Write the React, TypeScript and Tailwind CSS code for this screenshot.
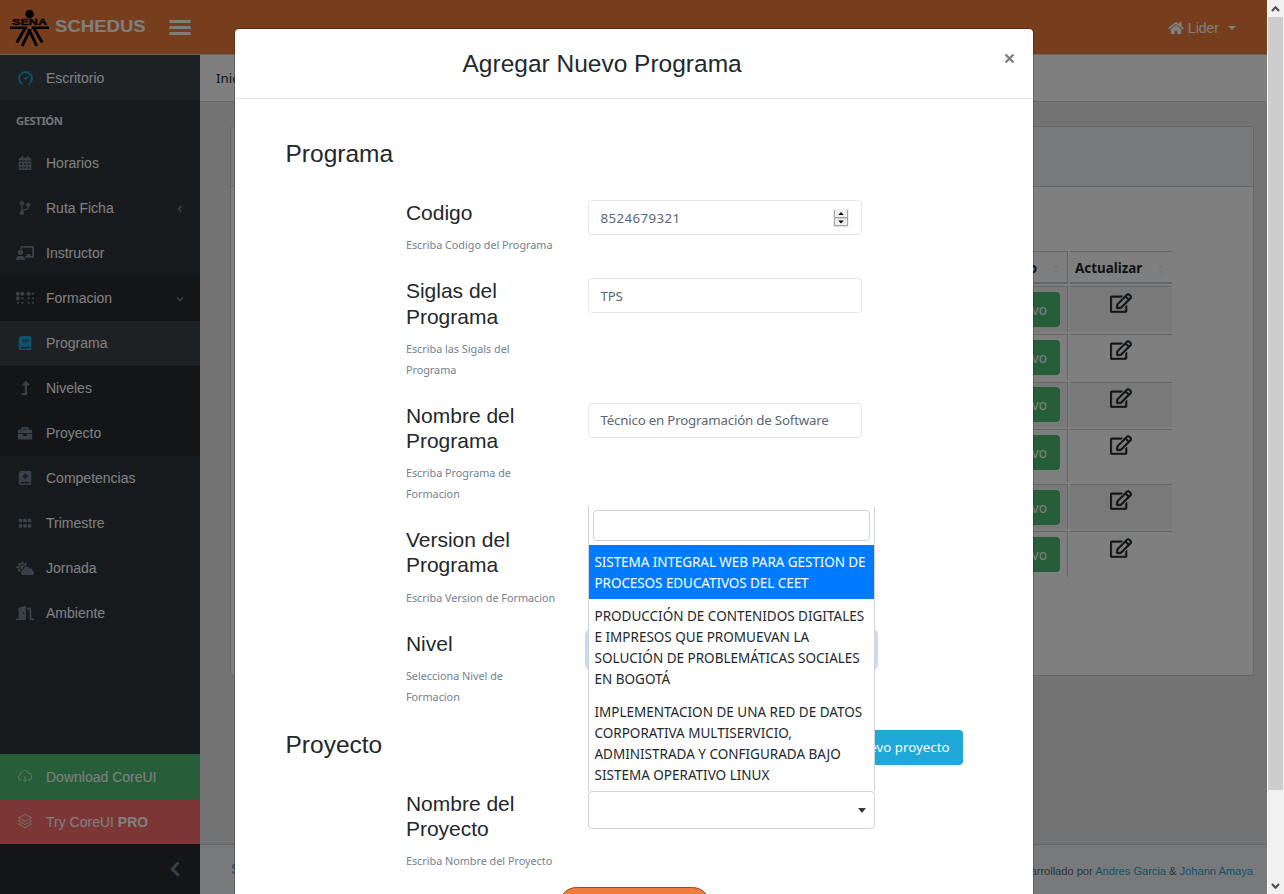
import React from "react";
import {
  FaBook,
  FaBookMedical,
  FaBraille,
  FaBriefcase,
  FaCalendarAlt,
  FaChalkboardTeacher,
  FaCloudSun,
  FaCodeBranch,
  FaDoorOpen,
  FaGripHorizontal,
  FaHome,
  FaLevelUpAlt,
  FaRegEdit,
} from "react-icons/fa";
import { SlCloudDownload, SlLayers, SlSpeedometer } from "react-icons/sl";

const sans = "font-['Liberation_Sans',Arial,sans-serif]";
const ui = "font-['Noto_Sans','Open_Sans',sans-serif]";

function Logo() {
  return (
    <svg width="40" height="40" viewBox="0 0 40 40" className="shrink-0">
      <circle cx="19.6" cy="5" r="4.3" />
      <text
        x="2"
        y="16.4"
        textLength="35"
        lengthAdjust="spacingAndGlyphs"
        fontSize="9"
        fontWeight="700"
        fontFamily="Liberation Sans, Arial, sans-serif"
        stroke="#000"
        strokeWidth="0.3"
      >
        SENA
      </text>
      <path d="M0 17.6h17.6l-1 2.4H0zM39 17.6H21.4l1 2.4H39z" />
      <path
        d="M15.4 18.8 6.8 33.6M23.6 18.8l8.6 14.8M19.5 21.6 12.2 37M19.5 21.6l7.3 15.4"
        stroke="#000"
        strokeWidth="2.9"
        fill="none"
      />
      <path d="M17 20h5l-2.5 5z" />
    </svg>
  );
}

function Chevron({ open = false }: { open?: boolean }) {
  return (
    <svg width="8" height="8" viewBox="0 0 8 8" fill="none" stroke="#73818f" strokeWidth="1.5">
      <path d={open ? "M1 2.5 4 5.5 7 2.5" : "M5.5 1 2.5 4 5.5 7"} />
    </svg>
  );
}

type Item = {
  label: string;
  icon: React.ReactNode;
  active?: boolean;
  chevron?: "open" | "closed";
};

function NavItem({ label, icon, active, chevron }: Item) {
  return (
    <div className={`flex h-[45px] items-center px-4 ${active ? "bg-[#3a4248]" : ""}`}>
      <span
        className={`flex w-[18px] shrink-0 justify-center pb-px [&>svg]:h-[14.4px] [&>svg]:w-[18px] [&>svg]:shrink-0 ${active ? "text-[#20a8d8]" : "text-[#73818f]"}`}
      >
        {icon}
      </span>
      <span className="ml-3 flex-1 text-[14px] text-white">{label}</span>
      {chevron && <Chevron open={chevron === "open"} />}
    </div>
  );
}

function Sidebar() {
  return (
    <nav className={`flex w-[200px] shrink-0 flex-col bg-[#2f353a] ${sans}`}>
      <div className="flex h-[45px] items-center bg-[#3a4248] px-4 pt-px text-[14px] text-white">
        <SlSpeedometer className="mx-[1.5px] h-[15px] w-[15px] pb-px text-[#20a8d8]" stroke="currentColor" strokeWidth="45" />
        <span className="ml-3">Escritorio</span>
      </div>
      <div className={`flex h-[41px] items-center px-4 pt-[2px] text-[11.2px] font-bold tracking-[-0.4px] text-[#e4e5e6] ${ui}`}>
        GESTIÓN
      </div>
      <NavItem label="Horarios" icon={<FaCalendarAlt />} />
      <NavItem label="Ruta Ficha" icon={<FaCodeBranch />} chevron="closed" />
      <NavItem label="Instructor" icon={<FaChalkboardTeacher />} />
      <div className="bg-[#262a2e]">
        <NavItem label="Formacion" icon={<FaBraille stroke="currentColor" strokeWidth="20" />} chevron="open" />
        <NavItem label="Programa" icon={<FaBook />} active />
        <NavItem label="Niveles" icon={<FaLevelUpAlt />} />
        <NavItem label="Proyecto" icon={<FaBriefcase />} />
      </div>
      <NavItem label="Competencias" icon={<FaBookMedical />} />
      <NavItem label="Trimestre" icon={<FaGripHorizontal />} />
      <NavItem label="Jornada" icon={<FaCloudSun />} />
      <NavItem label="Ambiente" icon={<FaDoorOpen />} />
      <div className="mt-auto flex h-[45px] items-center bg-[#4dbd74] px-4 pt-px text-[14px] text-white">
        <span className="flex w-[18px] justify-center pb-[2px] opacity-70">
          <SlCloudDownload />
        </span>
        <span className="ml-3">Download CoreUI</span>
      </div>
      <div className="flex h-[45px] items-center bg-[#f86c6b] px-4 pt-px text-[14px] text-white">
        <span className="flex w-[18px] justify-center pb-[2px] opacity-70">
          <SlLayers />
        </span>
        <span className="ml-3">
          Try CoreUI <b>PRO</b>
        </span>
      </div>
      <div className="flex h-[50px] items-center justify-end bg-[#262a2e] pr-5">
        <svg width="10" height="16" viewBox="0 0 10 16" fill="none" stroke="#73818f" strokeWidth="3">
          <path d="M8.5 1.5 2.3 8l6.2 6.5" />
        </svg>
      </div>
    </nav>
  );
}

function SortMark() {
  return (
    <svg width="6" height="10" viewBox="0 0 6 10" fill="#f1f1f1">
      <path d="M3 0 6 4H0zM3 10 0 6h6z" />
    </svg>
  );
}

const rows = [
  { height: "h-[46px]", button: "mt-[5px]", icon: "mt-[6px]", odd: true },
  { height: "h-[46px]", button: "mt-[5px]", icon: "mt-[5px]", odd: false },
  { height: "h-[45px]", button: "mt-[4px]", icon: "mt-[5px]", odd: true },
  { height: "h-[53px]", button: "mt-[5px]", icon: "mt-[5px]", odd: false },
  { height: "h-[45px]", button: "mt-[5px]", icon: "mt-[5px]", odd: true },
  { height: "h-[46px]", button: "mt-[5px]", icon: "mt-[6px]", odd: false },
];

function ProgramTable() {
  return (
    <div className={`mt-16 mr-[81px] ml-auto flex w-[300px] flex-col gap-[2px] text-[14px] text-[#23282c] ${ui}`}>
      <div className="flex h-[33px] gap-[2px] font-bold">
        <div className="flex flex-1 items-center justify-end gap-4 border-t border-r border-b-2 border-[#c8ced3] pt-[3px] pr-2 text-[13.4px]">
          Estado
          <SortMark />
        </div>
        <div className="flex w-[102px] items-center justify-between border-t border-b-2 border-[#c8ced3] pt-[3px] pr-2 pl-[5px] text-[13.4px]">
          Actualizar
          <SortMark />
        </div>
      </div>
      {rows.map((row, i) => (
        <div key={i} className={`flex gap-[2px] ${row.height}`}>
          <div
            className={`flex flex-1 items-start justify-end border-t border-r border-[#c8ced3] pr-[7px] ${row.odd ? "bg-[#f2f2f2]" : ""}`}
          >
            <button
              className={`h-[35px] rounded bg-[#4dbd74] px-[13px] pt-[2px] text-[13.6px] text-white ${row.button}`}
            >
              Activo
            </button>
          </div>
          <div
            className={`flex w-[102px] items-start justify-center border-t border-[#c8ced3] ${row.odd ? "bg-[#f2f2f2]" : ""}`}
          >
            <FaRegEdit className={`h-[20px] w-[22px] ${row.icon}`} stroke="currentColor" strokeWidth="10" />
          </div>
        </div>
      ))}
    </div>
  );
}

function Page() {
  return (
    <div className="flex h-full w-[1267px] flex-col bg-[#e4e6e5]">
      <header className={`flex h-[55px] shrink-0 items-center border-b border-[#c8ced3] bg-[#ef7c3c] pl-[10px] text-white ${sans}`}>
        <div className="flex items-center pt-[3px]">
          <Logo />
          <span className="ml-[5px] w-[91px] origin-left scale-x-[1.16] pb-[3px] text-[16px] leading-none font-bold">
            SCHEDUS
          </span>
        </div>
        <div className="ml-[23px] flex w-[22px] flex-col gap-[3px]">
          <i className="h-[3px] rounded-full bg-white" />
          <i className="h-[3px] rounded-full bg-white" />
          <i className="h-[3px] rounded-full bg-white" />
        </div>
        <div className="mr-[31px] ml-auto flex items-center pt-[2px] text-[14px]">
          <FaHome className="mr-1 h-[14px] w-[16px]" />
          Lider
          <i className="ml-[9px] border-x-[4.5px] border-t-4 border-x-transparent border-t-white" />
        </div>
      </header>
      <div className="flex flex-1">
        <Sidebar />
        <main className="flex flex-1 flex-col">
          <div className={`flex h-[47px] items-center border-b border-[#c8ced3] bg-white px-4 pt-[2px] text-[13.3px] text-[#23282c] ${ui}`}>
            Inicio
          </div>
          <section className="mt-6 mr-[13px] ml-[30px] flex h-[550px] flex-col rounded border border-[#c8ced3] bg-white">
            <div className="h-[60px] shrink-0 rounded-t border-b border-[#c8ced3] bg-[#f0f3f5]" />
            <ProgramTable />
          </section>
          <footer
            className={`mt-auto flex h-[50px] items-center border-t border-[#c8ced3] bg-[#f0f3f5] pr-[14px] pl-[31px] text-[11.2px] ${sans}`}
          >
            <span className="text-[14px] text-[#20a8d8]">SENA</span>
            <span className="ml-auto pt-[3px] tracking-[-0.05px] text-[#5c6873]">
              Desarrollado por <span className="text-[#20a8d8]">Andres Garcia</span> &amp;{" "}
              <span className="text-[#20a8d8]">Johann Amaya</span>
            </span>
          </footer>
        </main>
      </div>
    </div>
  );
}

type FieldProps = { title: string[]; help: string[]; children?: React.ReactNode };

function Field({ title, help, children }: FieldProps) {
  return (
    <div className="mb-[23px] flex pl-[170.4px]">
      <div className="w-[182.6px] shrink-0">
        <h4 className={`text-[21px] leading-[25.2px] text-[#23282c] ${sans}`}>
          {title.map((line) => (
            <span key={line} className="block">
              {line}
            </span>
          ))}
        </h4>
        <p className={`mt-[9px] text-[10.8px] leading-[21px] text-[#73818f] ${ui}`}>
          {help.map((line) => (
            <span key={line} className="block whitespace-nowrap">
              {line}
            </span>
          ))}
        </p>
      </div>
      {children}
    </div>
  );
}

function TextBox({ value, stepper }: { value: string; stepper?: boolean }) {
  return (
    <div
      className={`flex h-[35px] w-[274px] items-center rounded border border-[#e4e7ea] pr-3 pl-[11px] text-[13.3px] text-[#5c6873] ${ui} ${stepper ? "tracking-[0.4px]" : "tracking-[-0.2px]"}`}
    >
      <span className="pt-[2px]">{value}</span>
      {stepper && (
        <svg width="16" height="18" viewBox="0 0 16 18" className="ml-auto">
          <path fill="#f0f0f0" d="M0 0h16v18H0z" />
          <path fill="#a5a5a5" d="M1 1h1v16H1zM14 1h1v16h-1zM1 8h14v1.5H1zM1 16h14v1.3H1z" />
          <path d="M8 3l2.7 3H5.3zM8 14.5l2.7-3H5.3z" />
        </svg>
      )}
    </div>
  );
}

const options = [
  ["SISTEMA INTEGRAL WEB PARA GESTION DE", "PROCESOS EDUCATIVOS DEL CEET"],
  [
    "PRODUCCIÓN DE CONTENIDOS DIGITALES",
    "E IMPRESOS QUE PROMUEVAN LA",
    "SOLUCIÓN DE PROBLEMÁTICAS SOCIALES",
    "EN BOGOTÁ",
  ],
  [
    "IMPLEMENTACION DE UNA RED DE DATOS",
    "CORPORATIVA MULTISERVICIO,",
    "ADMINISTRADA Y CONFIGURADA BAJO",
    "SISTEMA OPERATIVO LINUX",
  ],
];

function ProjectSelect() {
  return (
    <div className="relative h-[38px] w-[287px]">
      <div className="flex h-full items-center justify-end rounded border border-[#ced4da] pt-px pr-[8px]">
        <i className="border-x-4 border-t-[5px] border-x-transparent border-t-[#343a40]" />
      </div>
      <div className={`absolute bottom-full left-0 w-full border-x border-[#ced4da] bg-white ${ui}`}>
        <div className="px-1 pt-1 pb-1">
          <div className="h-[31px] rounded border border-[#ced4da]" />
        </div>
        {options.map((lines, i) => (
          <div
            key={lines[0]}
            className={`pt-[7px] pb-[5px] pl-[5px] text-[13.5px] leading-[21px] ${i === 0 ? "bg-[#007bff] tracking-[-0.07px] text-white" : "text-[#23282c]"}`}
          >
            {lines.map((line) => (
              <div key={line} className="whitespace-nowrap">
                {line}
              </div>
            ))}
          </div>
        ))}
      </div>
    </div>
  );
}

function Modal() {
  return (
    <div className="mx-auto mt-7 w-[800px] rounded-t-[5px] border border-black/20 bg-white bg-clip-padding">
      <div className="flex h-[70px] items-center border-b border-[#e4e7ea] pr-[17px]">
        <h3 className={`ml-[228px] pt-[2px] text-[24.5px] leading-none text-[#23282c] ${sans}`}>Agregar Nuevo Programa</h3>
        <svg width="13" height="13" viewBox="0 0 13 13" stroke="#7f7f7f" strokeWidth="2.4" className="mt-[-10px] ml-auto">
          <path d="M2.5 2.5l8 8M10.5 2.5l-8 8" />
        </svg>
      </div>
      <div className="pt-10 pl-px">
        <h3 className={`mb-[31.7px] pl-[50px] text-[24.5px] leading-[29.4px] text-[#23282c] ${sans}`}>Programa</h3>
        <Field title={["Codigo"]} help={["Escriba Codigo del Programa"]}>
          <TextBox value="8524679321" stepper />
        </Field>
        <Field title={["Siglas del", "Programa"]} help={["Escriba las Sigals del", "Programa"]}>
          <TextBox value="TPS" />
        </Field>
        <Field title={["Nombre del", "Programa"]} help={["Escriba Programa de", "Formacion"]}>
          <TextBox value="Técnico en Programación de Software" />
        </Field>
        <Field title={["Version del", "Programa"]} help={["Escriba Version de Formacion"]} />
        <Field title={["Nivel"]} help={["Selecciona Nivel de", "Formacion"]}>
          <div className="h-[37px] w-[287px] rounded border border-[#80bdff] ring-3 ring-[#bfdeff]" />
        </Field>
        <div className="mb-[26px] flex h-[35px] items-start justify-between pr-[70px] pl-[50px]">
          <h3 className={`text-[24.5px] leading-[29.4px] text-[#23282c] ${sans}`}>Proyecto</h3>
          <button className={`h-[35px] rounded bg-[#20a8d8] px-[13px] pt-[2px] text-[13.3px] text-white ${ui}`}>
            Nuevo proyecto
          </button>
        </div>
        <Field title={["Nombre del", "Proyecto"]} help={["Escriba Nombre del Proyecto"]}>
          <ProjectSelect />
        </Field>
        <div className="mx-auto mt-[-7px] h-[35px] w-[151px] rounded-full border border-[#9b4a1a] bg-[#ef7c3c]" />
      </div>
    </div>
  );
}

function Scrollbar() {
  return (
    <div className="flex w-[17px] flex-col items-center border-l border-white bg-[#f0f0f0]">
      <svg width="16" height="17" viewBox="0 0 16 17" fill="none" stroke="#505050" strokeWidth="2.2">
        <path d="M4 11l3.5-3.7L11 11" />
      </svg>
      <div className="h-[773px] w-full border-r border-[#f0f0f0] bg-[#cdcdcd]" />
      <svg width="16" height="17" viewBox="0 0 16 17" fill="none" stroke="#505050" strokeWidth="2.2" className="mt-auto">
        <path d="M4 7l3.5 3.7L11 7" />
      </svg>
    </div>
  );
}

export default function App() {
  return (
    <div className="relative flex h-[894px] w-[1284px] overflow-hidden">
      <Page />
      <Scrollbar />
      <div className="absolute top-0 left-0 h-full w-[1267px] overflow-hidden bg-black/50">
        <Modal />
      </div>
    </div>
  );
}
